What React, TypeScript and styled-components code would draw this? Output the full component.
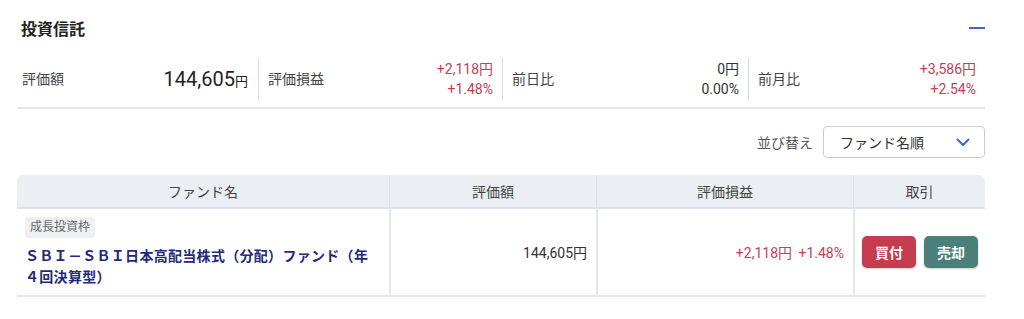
import React from 'react';
import styled, { createGlobalStyle } from 'styled-components';

const GlobalStyle = createGlobalStyle`
  body {
    margin: 0;
    background: #fff;
    font-family: Roboto, "Noto Sans CJK JP", sans-serif;
    color: #333;
  }
`;

const Page = styled.div`
  width: 968px;
  padding: 16px 39px 0 17px;
`;

const TitleRow = styled.div`
  display: flex;
  justify-content: space-between;
  align-items: center;
  height: 24px;
`;

const Title = styled.h2`
  margin: 0 0 0 4px;
  font-size: 16px;
  font-weight: 700;
  color: #222;
`;

const Collapse = styled.button`
  width: 16px;
  height: 16px;
  padding: 0;
  border: none;
  background: transparent;
  display: flex;
  align-items: center;
  cursor: pointer;

  &::before {
    content: '';
    display: block;
    width: 16px;
    height: 2px;
    background: #3f64d4;
  }
`;

const Summary = styled.div`
  display: grid;
  grid-template-columns: 241px 244px 246px 1fr;
  margin-top: 10px;
  padding: 8px 0 7px;
  border-bottom: 2px solid #e4e7ec;
`;

const SummaryCell = styled.div<{ $first?: boolean }>`
  display: flex;
  justify-content: space-between;
  align-items: center;
  height: 42px;
  padding: ${(p) => (p.$first ? '0 10px 0 5px' : '0 9px')};
  border-left: ${(p) => (p.$first ? 'none' : '1px solid #d6dae1')};
`;

const Label = styled.span`
  font-size: 14px;
  color: #444;
  margin-top: -3px;
`;

const Values = styled.div<{ $up?: boolean }>`
  text-align: right;
  font-size: 14px;
  line-height: 20px;
  color: ${(p) => (p.$up ? '#c83c55' : '#333')};
`;

const BigValue = styled.span`
  font-size: 20px;
  color: #222;

  small {
    font-size: 13px;
  }
`;

const SortRow = styled.div`
  display: flex;
  justify-content: flex-end;
  align-items: center;
  gap: 10px;
  margin-top: 17px;
`;

const SortLabel = styled.span`
  font-size: 14px;
  color: #555;
`;

const Select = styled.div`
  box-sizing: border-box;
  width: 162px;
  height: 32px;
  display: flex;
  justify-content: space-between;
  align-items: center;
  padding: 0 14px 0 16px;
  border: 1px solid #c5cad3;
  border-radius: 4px;
  font-size: 14px;
  color: #333;
`;

const Table = styled.div`
  margin-top: 17px;
  display: grid;
  grid-template-columns: 372px 207px 257px 132px;
`;

const HeadCell = styled.div<{ $pos?: 'first' | 'last' }>`
  height: 32px;
  display: flex;
  align-items: center;
  justify-content: center;
  background: #ebeef3;
  border-bottom: 2px solid #dde1e8;
  border-left: ${(p) => (p.$pos === 'first' ? 'none' : '1px solid #dde1e8')};
  border-radius: ${(p) =>
    p.$pos === 'first' ? '6px 0 0 0' : p.$pos === 'last' ? '0 6px 0 0' : '0'};
  font-size: 14px;
  color: #444;
`;

const Cell = styled.div<{ $align?: 'left' | 'right'; $first?: boolean }>`
  box-sizing: border-box;
  min-width: 0;
  min-height: 88px;
  display: flex;
  flex-direction: column;
  justify-content: ${(p) => (p.$first ? 'flex-start' : 'center')};
  align-items: ${(p) => (p.$align === 'right' ? 'flex-end' : 'flex-start')};
  padding: ${(p) => (p.$first ? '8px 14px 6px 8px' : '0 9px 0 7px')};
  border-bottom: 2px solid #e4e7ec;
  border-left: ${(p) => (p.$first ? 'none' : '2px solid #e4e7ec')};
  font-size: 14px;
`;

const Tag = styled.span`
  padding: 2px 5px;
  background: #eef0f4;
  border-radius: 3px;
  font-size: 12px;
  line-height: 17px;
  color: #666;
`;

const FundName = styled.a`
  margin-top: 8px;
  font-size: 14px;
  font-weight: 700;
  line-height: 21px;
  letter-spacing: 0.3px;
  color: #1f2a7c;
  text-decoration: none;
`;

const Red = styled.span`
  color: #c83c55;
  word-spacing: 3px;
`;

const Actions = styled.div`
  display: flex;
  gap: 8px;
`;

const TradeButton = styled.button<{ $kind: 'buy' | 'sell' }>`
  width: 54px;
  height: 32px;
  border: none;
  border-radius: 5px;
  background: ${(p) => (p.$kind === 'buy' ? '#c53b50' : '#4b7f79')};
  box-shadow: 0 1px 2px rgba(0, 0, 0, 0.2);
  color: #fff;
  font-family: inherit;
  font-size: 14px;
  font-weight: 700;
  cursor: pointer;
`;

const Chevron = () => (
  <svg width="14" height="9" viewBox="0 0 14 9" fill="none">
    <path d="M1.5 1.5 7 7l5.5-5.5" stroke="#3f64d4" strokeWidth="2" strokeLinecap="round" strokeLinejoin="round" />
  </svg>
);

export default function App() {
  return (
    <Page>
      <GlobalStyle />
      <TitleRow>
        <Title>投資信託</Title>
        <Collapse aria-label="閉じる" />
      </TitleRow>

      <Summary>
        <SummaryCell $first>
          <Label>評価額</Label>
          <BigValue>
            144,605<small>円</small>
          </BigValue>
        </SummaryCell>
        <SummaryCell>
          <Label>評価損益</Label>
          <Values $up>
            +2,118円
            <br />
            +1.48%
          </Values>
        </SummaryCell>
        <SummaryCell>
          <Label>前日比</Label>
          <Values>
            0円
            <br />
            0.00%
          </Values>
        </SummaryCell>
        <SummaryCell>
          <Label>前月比</Label>
          <Values $up>
            +3,586円
            <br />
            +2.54%
          </Values>
        </SummaryCell>
      </Summary>

      <SortRow>
        <SortLabel>並び替え</SortLabel>
        <Select>
          <span>ファンド名順</span>
          <Chevron />
        </Select>
      </SortRow>

      <Table>
        <HeadCell $pos="first">ファンド名</HeadCell>
        <HeadCell>評価額</HeadCell>
        <HeadCell>評価損益</HeadCell>
        <HeadCell $pos="last">取引</HeadCell>

        <Cell $first>
          <Tag>成長投資枠</Tag>
          <FundName href="#">ＳＢＩ－ＳＢＩ日本高配当株式（分配）ファンド（年４回決算型）</FundName>
        </Cell>
        <Cell $align="right">144,605円</Cell>
        <Cell $align="right">
          <Red>+2,118円 +1.48%</Red>
        </Cell>
        <Cell>
          <Actions>
            <TradeButton $kind="buy">買付</TradeButton>
            <TradeButton $kind="sell">売却</TradeButton>
          </Actions>
        </Cell>
      </Table>
    </Page>
  );
}
